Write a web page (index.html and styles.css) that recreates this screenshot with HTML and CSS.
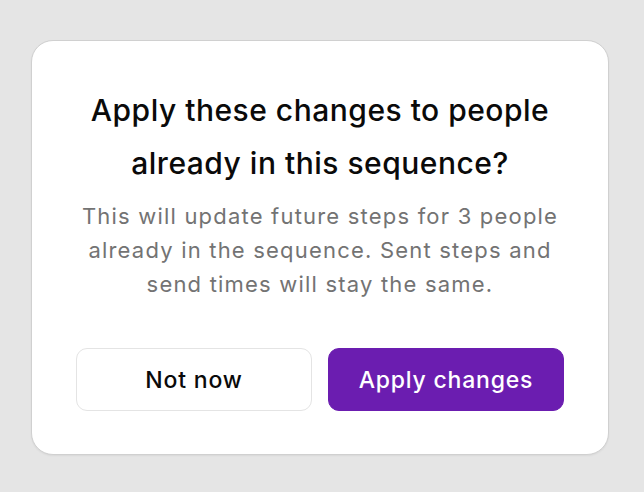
FILE: index.html
```html
<!DOCTYPE html>
<html>
<head>
<meta charset="utf-8">
<link rel="stylesheet" href="styles.css">
</head>
<body>
<div class="page">
  <div class="card">
    <h1 class="title">Apply these changes to people already in this sequence?</h1>
    <p class="desc">This will update future steps for 3 people already in the sequence. Sent steps and send times will stay the same.</p>
    <div class="actions">
      <button class="btn btn-secondary">Not now</button>
      <button class="btn btn-primary">Apply changes</button>
    </div>
  </div>
</div>
</body>
</html>
```
FILE: styles.css
```css
html, body {
  margin: 0;
  padding: 0;
  background: #e5e5e5;
  font-family: Inter, "Noto Sans", sans-serif;
}
.page {
  width: 644px;
  height: 492px;
  padding: 40px 0 0 31px;
  box-sizing: border-box;
}
.card {
  width: 578px;
  height: 415px;
  box-sizing: border-box;
  background: #fff;
  border: 1px solid #d0d0d0;
  border-radius: 22px;
  box-shadow: 0 1px 2px rgba(0,0,0,0.06);
  padding: 43px 30px 0 30px;
  display: flex;
  flex-direction: column;
  align-items: center;
  text-align: center;
}
.title {
  margin: 0;
  font-size: 30px;
  font-weight: 500;
  line-height: 53px;
  color: #0a0a0a;
  letter-spacing: 0.5px;
  width: 480px;
}
.desc {
  margin: 9px 0 0 0;
  font-size: 22px;
  font-weight: 400;
  line-height: 34px;
  color: #737373;
  letter-spacing: 1.2px;
  width: 500px;
}
.actions {
  margin-top: 47px;
  display: flex;
  gap: 16px;
  width: 488px;
}
.btn {
  flex: 1;
  height: 63px;
  border-radius: 11px;
  font-family: Inter, "Noto Sans", sans-serif;
  font-size: 23px;
  font-weight: 500;
  letter-spacing: 0.8px;
  cursor: pointer;
}
.btn-secondary {
  background: #fff;
  border: 1px solid #e4e4e4;
  color: #0a0a0a;
}
.btn-primary {
  background: #6b1db0;
  border: 1px solid #6b1db0;
  color: #fff;
}
```
